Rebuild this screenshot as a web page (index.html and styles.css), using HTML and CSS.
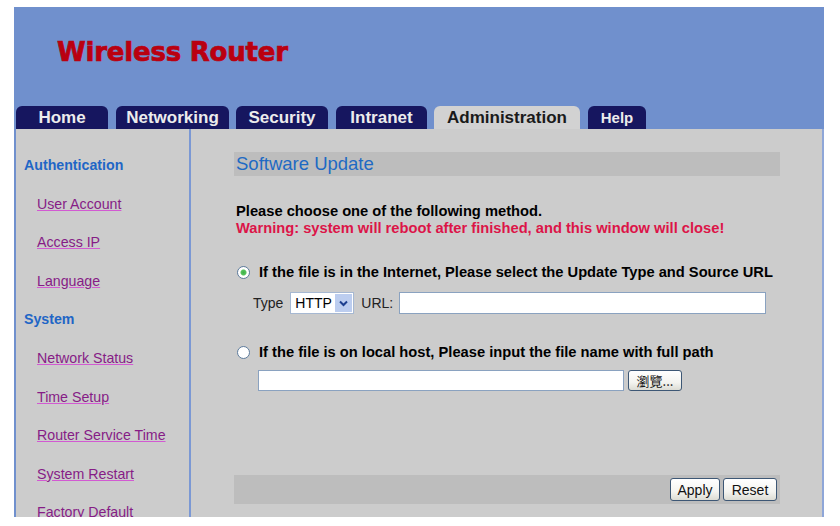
FILE: index.html
```html
<!DOCTYPE html>
<html>
    <head>
        <meta charset="UTF-8">
        <title>Wireless Router - Software Update</title>
        <link rel="stylesheet" href="styles.css">
    </head>
    <body>
        <div class="frame">
            <div class="header">
                <h1 class="brand">Wireless Router</h1>
                <ul class="tabs">
                    <li class="tab tab--home">Home</li>
                    <li class="tab tab--net">Networking</li>
                    <li class="tab tab--sec">Security</li>
                    <li class="tab tab--intra">Intranet</li>
                    <li class="tab tab--admin active">Administration</li>
                    <li class="tab tab--help">Help</li>
                </ul>
            </div>
            <div class="main">
                <div class="side">
                    <div class="side-title">Authentication</div>
                    <a class="side-link" href="#">User Account</a>
                    <a class="side-link" href="#">Access IP</a>
                    <a class="side-link" href="#">Language</a>
                    <div class="side-title">System</div>
                    <a class="side-link" href="#">Network Status</a>
                    <a class="side-link" href="#">Time Setup</a>
                    <a class="side-link" href="#">Router Service Time</a>
                    <a class="side-link" href="#">System Restart</a>
                    <a class="side-link" href="#">Factory Default</a>
                </div>
                <div class="content">
                    <div class="bar-title">Software Update</div>
                    <p class="intro">
                        Please choose one of the following method.<br>
                        <span class="warn">Warning: system will reboot after finished, and this window will close!</span>
                    </p>

                    <div class="opt">
                        <span class="radio checked"></span>
                        If the file is in the Internet, Please select the Update Type and Source URL
                    </div>
                    <div class="row row--url">
                        <span class="lbl">Type</span>
                        <span class="select">
                            <span class="select-val">HTTP</span>
                            <span class="select-btn">
                                <svg width="9" height="7" viewBox="0 0 9 7"><path d="M1 1.5 L4.5 5 L8 1.5" fill="none" stroke="#1d3f8f" stroke-width="2"/></svg>
                            </span>
                        </span>
                        <span class="lbl">URL:</span>
                        <span class="input input--url"></span>
                    </div>

                    <div class="opt opt--local">
                        <span class="radio"></span>
                        If the file is on local host, Please input the file name with full path
                    </div>
                    <div class="row row--file">
                        <span class="input input--file"></span>
                        <button class="btn btn--browse">瀏覽...</button>
                    </div>

                    <div class="actions">
                        <button class="btn btn--apply">Apply</button>
                        <button class="btn btn--reset">Reset</button>
                    </div>
                </div>
            </div>
        </div>
    </body>
</html>
```

FILE: styles.css
```css
body {
    margin:0;
    padding:7px 0 0 14px;
    background:#fff;
    font-family:"Liberation Sans", Arial, Helvetica, sans-serif;
    color:#000
}
.frame {
    width:810px
}
.header {
    background:#7090cd;
    height:122px;
    display:flex;
    flex-direction:column;
    justify-content:space-between
}
.brand {
    margin:0;
    padding:30px 0 0 43px;
    font-family:"DejaVu Sans", "Liberation Sans", sans-serif;
    font-size:26px;
    font-weight:bold;
    color:#ba0010;
    -webkit-text-stroke:0.7px #ba0010;
    letter-spacing:-0.2px
}
.tabs {
    list-style:none;
    margin:0 0 0 2px;
    padding:0;
    display:flex;
    gap:8px
}
.tab {
    height:23px;
    line-height:24px;
    text-align:center;
    background:#16165f;
    color:#ececec;
    font-size:17px;
    font-weight:bold;
    border-radius:6px 6px 0 0
}
.tab--home { width:92px }
.tab--net { width:113px; margin-right:-1px }
.tab--sec { width:92px }
.tab--intra { width:91px }
.tab--admin { width:146px; margin-left:-1px }
.tab--help { width:58px; font-size:15px }
.tab.active {
    background:#d2d2d2;
    color:#1a1a1a
}
.main {
    display:flex;
    height:388px;
    background:#cccccc;
    border-left:2px solid #7090cd;
    border-right:2px solid #8ea6d8;
    box-sizing:border-box
}
.side {
    width:173px;
    flex:none;
    border-right:2px solid #7b98d4;
    padding-top:17px;
    overflow:hidden;
    font-size:14.2px
}
.side-title, .side-link {
    display:block;
    height:38.6px;
    line-height:38.6px;
    white-space:nowrap
}
.side-title {
    padding-left:8px;
    font-weight:bold;
    color:#1f66c6
}
.side-link {
    padding-left:21px;
    color:#861c86;
    text-decoration:underline;
    text-decoration-color:#d25ad2
}
.content {
    flex:1;
    padding:23px 42px 0 43px;
    display:flex;
    flex-direction:column
}
.bar-title {
    height:24px;
    line-height:24px;
    background:#bdbdbd;
    color:#1e6ac4;
    font-size:18.5px;
    padding-left:2px
}
.intro {
    margin:27px 0 0 2px;
    font-size:14.7px;
    font-weight:bold;
    line-height:17px
}
.warn {
    color:#dc1448
}
.opt {
    margin:24px 0 0 3px;
    height:22px;
    display:flex;
    align-items:center;
    gap:9px;
    font-size:14.7px;
    font-weight:bold
}
.opt--local {
    margin-top:27px
}
.radio {
    width:11px;
    height:11px;
    border:1px solid #5d7b9c;
    border-radius:50%;
    background:#fff;
    flex:none
}
.radio.checked {
    background:radial-gradient(circle, #3fb04a 0, #56c45c 2.5px, #fff 3.5px)
}
.row {
    margin-top:9px;
    display:flex;
    align-items:center;
    font-size:14px
}
.row--url {
    padding-left:19px;
    height:22px
}
.row--file {
    margin-top:6px;
    padding-left:24px;
    height:22px
}
.lbl {
    color:#222
}
.select {
    margin:0 7px 0 7px;
    width:62px;
    height:20px;
    border:1px solid #a6b8d2;
    background:#fff;
    display:flex;
    align-items:center;
    justify-content:space-between
}
.select-val {
    padding-left:4px
}
.select-btn {
    width:17px;
    height:18px;
    margin-right:1px;
    background:#bccdef;
    display:flex;
    align-items:center;
    justify-content:center
}
.input {
    display:block;
    background:#fff;
    border:1px solid #8aa2c0;
    box-sizing:border-box
}
.input--url {
    margin-left:6px;
    width:367px;
    height:22px
}
.input--file {
    width:366px;
    height:21px
}
.btn {
    font-family:"Liberation Sans", Arial, sans-serif;
    font-size:14px;
    color:#111;
    height:23px;
    padding:0;
    border:1px solid #3d5775;
    border-radius:3px;
    background:linear-gradient(#ffffff, #f4f4f0 60%, #dcdcd4)
}
.btn--browse {
    margin-left:4px;
    width:54px;
    height:21px;
    font-family:"Noto Sans CJK TC", "Liberation Sans", sans-serif;
    font-size:13px
}
.actions {
    margin-top:auto;
    margin-bottom:13px;
    height:29px;
    background:#bdbdbd;
    display:flex;
    align-items:center;
    justify-content:flex-end;
    gap:3px;
    padding-right:3px
}
.btn--apply { width:50px }
.btn--reset { width:54px }
```
